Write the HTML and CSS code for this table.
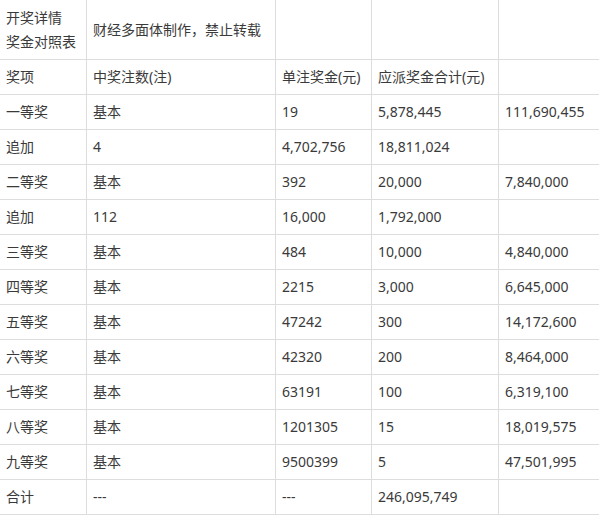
FILE: index.html
```html
<!DOCTYPE html>
<html lang="zh">
<head>
<meta charset="utf-8">
<link rel="stylesheet" href="styles.css">
</head>
<body>
<table class="prize">
<colgroup>
<col class="c1"><col class="c2"><col class="c3"><col class="c4"><col class="c5">
</colgroup>
<tr class="head"><td>开奖详情<br>奖金对照表</td><td>财经多面体制作，禁止转载</td><td></td><td></td><td></td></tr>
<tr><td>奖项</td><td>中奖注数(注)</td><td>单注奖金(元)</td><td>应派奖金合计(元)</td><td></td></tr>
<tr><td>一等奖</td><td>基本</td><td>19</td><td>5,878,445</td><td>111,690,455</td></tr>
<tr><td>追加</td><td>4</td><td>4,702,756</td><td>18,811,024</td><td></td></tr>
<tr><td>二等奖</td><td>基本</td><td>392</td><td>20,000</td><td>7,840,000</td></tr>
<tr><td>追加</td><td>112</td><td>16,000</td><td>1,792,000</td><td></td></tr>
<tr><td>三等奖</td><td>基本</td><td>484</td><td>10,000</td><td>4,840,000</td></tr>
<tr><td>四等奖</td><td>基本</td><td>2215</td><td>3,000</td><td>6,645,000</td></tr>
<tr><td>五等奖</td><td>基本</td><td>47242</td><td>300</td><td>14,172,600</td></tr>
<tr><td>六等奖</td><td>基本</td><td>42320</td><td>200</td><td>8,464,000</td></tr>
<tr><td>七等奖</td><td>基本</td><td>63191</td><td>100</td><td>6,319,100</td></tr>
<tr><td>八等奖</td><td>基本</td><td>1201305</td><td>15</td><td>18,019,575</td></tr>
<tr><td>九等奖</td><td>基本</td><td>9500399</td><td>5</td><td>47,501,995</td></tr>
<tr><td>合计</td><td>---</td><td>---</td><td>246,095,749</td><td></td></tr>
</table>
</body>
</html>
```
FILE: styles.css
```css
html, body {
  margin: 0;
  padding: 0;
  background: #fff;
  overflow: hidden;
}
.prize {
  border-collapse: collapse;
  table-layout: fixed;
  width: 603px;
  margin: -1px 0 0 -1px;
  font-family: "Noto Sans", "Noto Sans CJK SC", sans-serif;
  font-size: 14px;
  color: #3a3a3a;
}
.c1 { width: 87px; }
.c2 { width: 189px; }
.c3 { width: 96px; }
.c4 { width: 127px; }
.c5 { width: 104px; }
.prize td {
  border: 1px solid #ddd;
  height: 35px;
  padding: 0 6px;
  line-height: 24px;
  vertical-align: middle;
  white-space: nowrap;
  box-sizing: border-box;
}
.prize tr.head td {
  height: 60px;
}
```
